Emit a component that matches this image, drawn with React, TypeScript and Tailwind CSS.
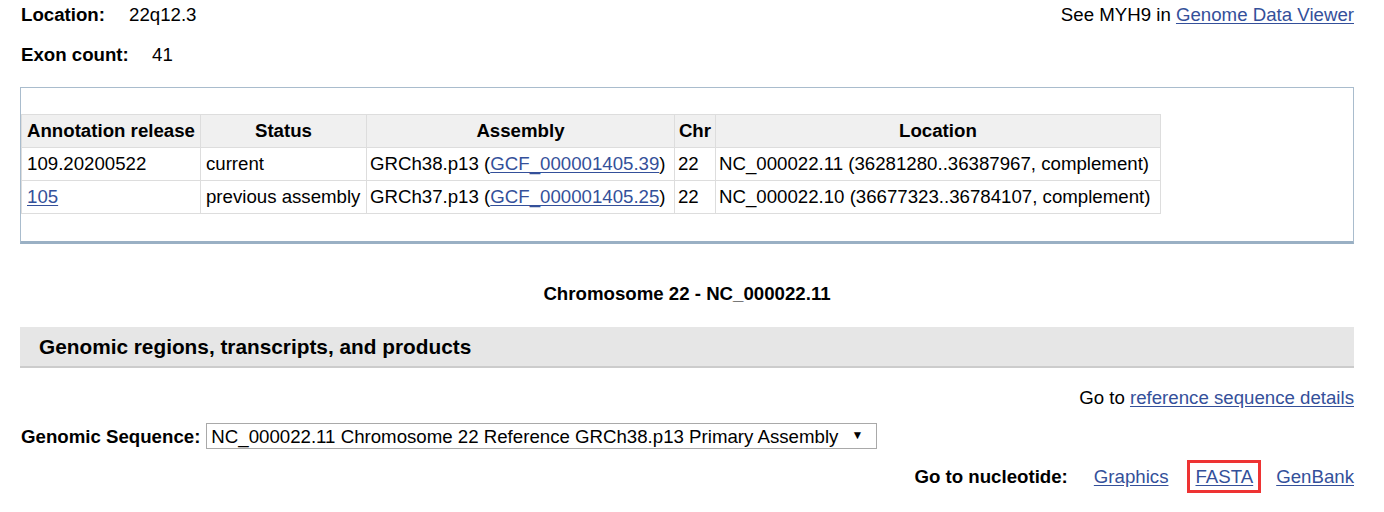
import React from 'react';

const link = 'text-[#34509a] underline underline-offset-2';

const rows = [
  {
    release: '109.20200522',
    releaseLink: false,
    status: 'current',
    asm: 'GRCh38.p13',
    gcf: 'GCF_000001405.39',
    chr: '22',
    loc: 'NC_000022.11 (36281280..36387967, complement)',
  },
  {
    release: '105',
    releaseLink: true,
    status: 'previous assembly',
    asm: 'GRCh37.p13',
    gcf: 'GCF_000001405.25',
    chr: '22',
    loc: 'NC_000022.10 (36677323..36784107, complement)',
  },
];

const th = 'border border-[#dddddd] whitespace-nowrap';
const td = 'border border-[#dddddd] whitespace-nowrap';

export default function App() {
  return (
    <div
      className="w-[1384px] h-[512px] overflow-hidden bg-white text-black text-[18.67px] leading-[1.15] pl-[20px] pr-[30px]"
      style={{ fontFamily: '"Liberation Sans", Arial, sans-serif' }}
    >
      {/* Summary */}
      <div className="flex items-start justify-between pt-[4px]">
        <div className="flex flex-col gap-[19px]">
          <div className="flex">
            <span className="font-bold w-[109px] pl-px">Location:</span>
            <span>22q12.3</span>
          </div>
          <div className="flex">
            <span className="font-bold w-[132px] pl-px">Exon count:</span>
            <span>41</span>
          </div>
        </div>
        <div>
          See MYH9 in <a className={link}>Genome Data Viewer</a>
        </div>
      </div>

      {/* Annotation releases */}
      <div className="mt-[21px] h-[157px] border-t border-l border-r border-[#a9bccd] border-b-[3px] border-b-[#9ab0c4] pt-[26px]">
        <table className="border-collapse">
          <thead>
            <tr className="bg-[#f0f0f0]">
              <th className={`${th} h-[33px] px-[5px] w-[178px]`}>Annotation release</th>
              <th className={`${th} px-[5px] w-[166px]`}>Status</th>
              <th className={`${th} px-[5px] w-[308px]`}>Assembly</th>
              <th className={`${th} px-[3px] w-[41px]`}>Chr</th>
              <th className={`${th} px-[3px] w-[445px]`}>Location</th>
            </tr>
          </thead>
          <tbody>
            {rows.map((r) => (
              <tr key={r.release}>
                <td className={`${td} h-[33px] px-[5px]`}>
                  {r.releaseLink ? <a className={link}>{r.release}</a> : r.release}
                </td>
                <td className={`${td} px-[5px]`}>{r.status}</td>
                <td className={`${td} px-[3px]`}>
                  {r.asm} (<a className={link}>{r.gcf}</a>)
                </td>
                <td className={`${td} px-[3px]`}>{r.chr}</td>
                <td className={`${td} px-[3px]`}>{r.loc}</td>
              </tr>
            ))}
          </tbody>
        </table>
      </div>

      <div className="mt-[39px] text-center font-bold">Chromosome 22 - NC_000022.11</div>

      {/* Section header */}
      <div className="mt-[23px] h-[41px] bg-[#e6e6e6] border-b-2 border-[#cccccc] flex items-center pl-[19px]">
        <h2 className="font-bold text-[20.8px] whitespace-nowrap">
          Genomic regions, transcripts, and products
        </h2>
      </div>

      <div className="mt-[19px] text-right">
        Go to <a className={link}>reference sequence details</a>
      </div>

      <div className="mt-[14px] flex items-center gap-[6px] h-[27px]">
        <span className="font-bold whitespace-nowrap pl-px">Genomic Sequence:</span>
        <div className="h-[26px] w-[671px] border border-[#a9a9a9] flex items-center justify-between px-[4px] overflow-hidden">
          <span className="whitespace-nowrap">
            NC_000022.11 Chromosome 22 Reference GRCh38.p13 Primary Assembly
          </span>
          <span className="text-[12px] pr-[9px]">▼</span>
        </div>
      </div>

      <div className="mt-[10px] flex items-center justify-end">
        <span className="font-bold mr-[26px]">Go to nucleotide:</span>
        <a className={link}>Graphics</a>
        <span className="ml-[19px] mr-[15px] border-[3px] border-[#ee3333] px-[5px] py-[3px]">
          <a className={link}>FASTA</a>
        </span>
        <a className={link}>GenBank</a>
      </div>
    </div>
  );
}
